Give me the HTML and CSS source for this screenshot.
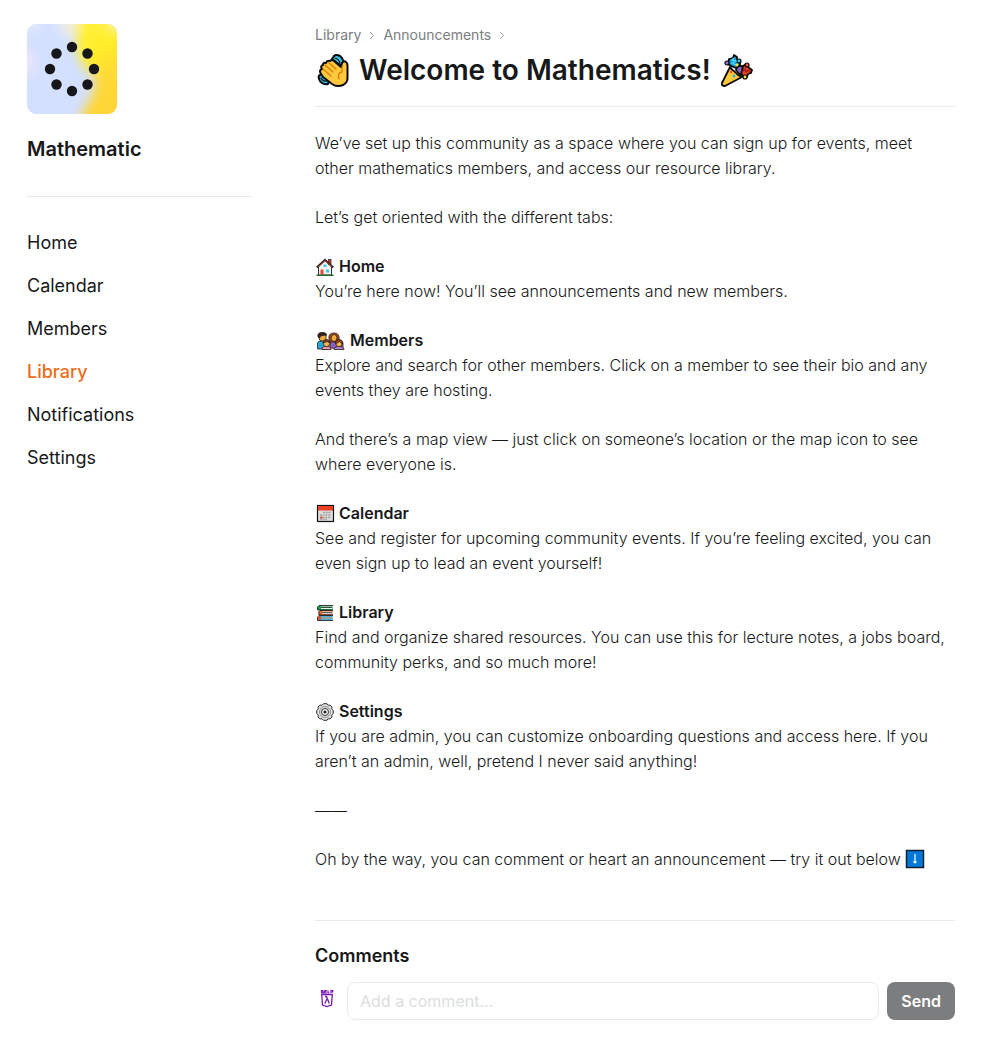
FILE: index.html
```html
<!DOCTYPE html>
<html lang="en">
<head>
<meta charset="utf-8">
<meta name="viewport" content="width=device-width, initial-scale=1">
<title>Welcome to Mathematics!</title>
<link rel="stylesheet" href="styles.css">
</head>
<body>
<div class="page">
  <aside class="sidebar">
    <svg class="logo" viewBox="0 0 90 90" role="img" aria-label="Mathematic logo">
      <defs>
        <clipPath id="tile"><rect width="90" height="90" rx="9"/></clipPath>
        <filter id="soft" x="-50%" y="-50%" width="200%" height="200%"><feGaussianBlur stdDeviation="6"/></filter>
        <linearGradient id="gold" x1="0" y1="0" x2="0.3" y2="1"><stop offset="0" stop-color="#fff34a"/><stop offset=".4" stop-color="#ffee28"/><stop offset=".62" stop-color="#ffda35"/><stop offset="1" stop-color="#ffd338"/></linearGradient>
      </defs>
      <g clip-path="url(#tile)">
        <rect width="90" height="90" fill="#d3e0ff"/>
        <g filter="url(#soft)">
          <ellipse cx="0" cy="38" rx="8" ry="14" fill="#eee5fb"/>
          <ellipse cx="3" cy="0" rx="12" ry="5" fill="#edf0fc"/>
          <ellipse cx="42" cy="0" rx="10" ry="12" fill="#f1eee5"/>
          <path d="M52-20L48 12Q50 42 68 52Q70 70 55 88L52 112H115V-20Z" fill="url(#gold)"/>
          <ellipse cx="92" cy="0" rx="12" ry="6" fill="#fff5a0"/>
        </g>
        <g fill="#17171b"><circle cx="45" cy="23" r="5.2"/><circle cx="60.500" cy="29.500" r="5.2"/><circle cx="67" cy="45" r="5.2"/><circle cx="60.500" cy="60.500" r="5.2"/><circle cx="45" cy="67" r="5.2"/><circle cx="29.500" cy="60.500" r="5.2"/><circle cx="23" cy="45" r="5.2"/><circle cx="29.500" cy="29.500" r="5.2"/></g>
      </g>
    </svg>
    <h2 class="brand">Mathematic</h2>
    <nav class="nav" aria-label="Main">
      <a href="#home">Home</a>
      <a href="#calendar">Calendar</a>
      <a href="#members">Members</a>
      <a href="#library" class="active" aria-current="page">Library</a>
      <a href="#notifications">Notifications</a>
      <a href="#settings">Settings</a>
    </nav>
  </aside>

  <main class="main">
    <header class="header">
      <nav class="crumbs" aria-label="Breadcrumb">
        <a href="#library">Library</a>
        <svg class="chevron" viewBox="0 0 6 9" aria-hidden="true"><path d="M1 1L4.500 4.500L1 8"/></svg>
        <a href="#announcements">Announcements</a>
        <svg class="chevron" viewBox="0 0 6 9" aria-hidden="true"><path d="M1 1L4.500 4.500L1 8"/></svg>
      </nav>
      <h1 class="title">
        <svg class="title-icon" viewBox="0 0 36 36" aria-hidden="true">
          <g stroke="#090909" stroke-linejoin="round" stroke-linecap="round">
            <path d="M19 4Q21 2 25 4Q29 7 28 12L25 13L17 7Z" fill="#35c6ee" stroke-width="2"/>
            <path d="M20 6Q24 7 25 11" fill="none" stroke-width="1.200"/>
            <path d="M5 23Q3 24 4 27Q6 33 13 32L14 29L7 22Z" fill="#35c6ee" stroke-width="2"/>
            <path d="M6 26Q8 30 12 29" fill="none" stroke-width="1.200"/>
            <path d="M8 25L5.500 21Q4 18 7 17Q5 14 8 13Q8 10 11 11Q12 8 15 9Q17 7 19 9L26 15L27 11Q29 8 31 10Q32.500 11 32.500 14V27Q32 31 28 33Q22 35.500 17 32Z" fill="#ffc83d" stroke-width="2"/>
          </g>
          <path d="M8 17L16 24M10 13L18 20M14 11L21 17M27 15V20Q22 21 24 27" fill="none" stroke="#d67d00" stroke-width="1.300" stroke-linecap="round"/>
        </svg>
        <span>Welcome to Mathematics!</span>
        <svg class="title-icon" viewBox="0 0 36 36" aria-hidden="true">
          <g stroke="#090909" stroke-linejoin="round" stroke-width="1.800">
            <path d="M17 18Q18 13 23 14L26 18L21 23Z" fill="#8067c6"/>
            <path d="M12 14L9 12L10 7L14 6L15 3L18 5L18 8L21 8V13L17 16Z" fill="#199bd1"/>
            <path d="M23 19L24 14L27 12L29 15L33 18L32 21L29 22L28 25L25 25L22 22Z" fill="#e9422b"/>
            <path d="M11 15L3 31Q2 34 6 34L23 25Q19 24 16 20Q12 17 11 15Z" fill="#ffc83d"/>
          </g>
          <g stroke="#090909" stroke-width="1.200"><circle cx="8" cy="11" r="2" fill="#9776d7"/><circle cx="26" cy="25" r="2" fill="#ffe02e"/><circle cx="28" cy="13" r="2" fill="#ff5a37"/><circle cx="20" cy="9" r="2" fill="#20cee8"/></g>
          <path d="M15 6L13 8L17 9L13 11L17 13" fill="none" stroke="#48d6fa" stroke-width="1.300"/>
          <path d="M23 20L26 17L27 20L30 18L31 20" fill="none" stroke="#a21a1a" stroke-width="1.200"/>
          <circle cx="18" cy="13" r="1.400" fill="#ffe02e"/><circle cx="12" cy="20" r="1.300" fill="#ef5038"/><circle cx="15" cy="24" r="1.400" fill="#20b8df"/>
        </svg>
      </h1>
    </header>

    <article class="article">
      <p>We’ve set up this community as a space where you can sign up for events, meet other mathematics members, and access our resource library.</p>
      <p>Let’s get oriented with the different tabs:</p>
      <section>
        <h3><svg class="icon" viewBox="0 0 20 20" aria-hidden="true"><path d="M3.500 9.500L10 3.500L16.500 9.500V18H3.500Z" fill="#f6f3f1" stroke="#333"/><rect x="13.500" y="2.500" width="2.500" height="5" fill="#d83b25" stroke="#333" stroke-width=".8"/><path d="M1.800 10.500L10 2.800L18.200 10.500" fill="none" stroke="#222" stroke-width="2"/><path d="M2.800 10.200L10 3.500L17.200 10.200" fill="none" stroke="#d94b30" stroke-width=".8"/><rect x="5.500" y="12.500" width="3" height="5" fill="#e64a35"/><path d="M8.500 7.500H11.500V10H8.500ZM11 12.500H14V15.500H11Z" fill="#35ccec"/><path d="M1.500 18.300H18.500" stroke="#256b2d" stroke-width="1.400"/></svg>Home</h3>
        <p>You’re here now! You’ll see announcements and new members.</p>
      </section>
      <section>
        <h3><svg class="icon family" viewBox="0 0 31 20" aria-hidden="true">
          <g stroke="#2a1b17" stroke-width=".8">
            <path d="M2.500 18V12Q3 10 6 10H11L13 12V18Z" fill="#20a8dc"/><path d="M4 5Q4 2 8 2Q11 2 11 5V8Q9 11 7 10Q4 10 4 7Z" fill="#edac3d"/><path d="M3 6Q2 1.500 7 1.500Q11 1 12 4L7 4.500Q5 5 4.500 7Z" fill="#342321"/>
            <path d="M15 17V11Q15 9 20 9Q27 9 28 12V18Z" fill="#8660c2"/><path d="M14 8Q13 2 19 2Q25 2 24 9L23 11H15Z" fill="#a94b1b"/><ellipse cx="19" cy="7" rx="3" ry="3.500" fill="#edac3d"/>
            <path d="M7 18.500V17Q8 15 12 15Q16 15 16 18.500Z" fill="#f39bb6"/><circle cx="11.500" cy="12.500" r="3.200" fill="#f2b748"/><path d="M8 12Q8 8.500 12 8.500Q15 9 15 12L12 10.500Z" fill="#9b431b"/>
            <path d="M19 18.500Q19 15.500 24 15.500Q29 15.500 29 18.500Z" fill="#b284d2"/><circle cx="24" cy="12.500" r="3.200" fill="#f2b748"/><path d="M20.500 13Q20 8.500 24 8.500Q28 8.500 27.500 13L24.500 10.500Z" fill="#9b431b"/>
          </g></svg>Members</h3>
        <p>Explore and search for other members. Click on a member to see their bio and any events they are hosting.</p>
      </section>
      <p>And there’s a map view — just click on someone’s location or the map icon to see where everyone is.</p>
      <section>
        <h3><svg class="icon" viewBox="0 0 20 20" aria-hidden="true"><rect x="2.500" y="1.500" width="16" height="16" fill="#ddd" stroke="#111" stroke-width="1.200"/><path d="M3 2H18V6.500H3Z" fill="#ed3f22"/><path d="M8 8.500H16M5 11H16M5 13.500H16M5 15.500H12" stroke="#a3a3a3" stroke-width="1.500" stroke-dasharray="2 .7"/><circle cx="6.500" cy="13.500" r="1.200" fill="#e64b32"/></svg>Calendar</h3>
        <p>See and register for upcoming community events. If you’re feeling excited, you can even sign up to lead an event yourself!</p>
      </section>
      <section>
        <h3><svg class="icon" viewBox="0 0 20 20" aria-hidden="true"><path d="M17.500 2.500H4Q2 3 2.500 7H17.500" fill="#16a34c"/><path d="M17.500 7.500H5Q3 8 4 12H17.500" fill="#e0662b"/><path d="M17.500 12.500H4Q2 13 2.500 17.500H17.500" fill="#159ad4"/><path d="M6 3.500H17V6H6ZM7 8.500H17V11H7ZM6 13.800H17V16.300H6Z" fill="#f2f2ef"/><path d="M18 2.500H4Q2 3 2.500 7H18M18 7.500H5Q3 8 4 12H18M18 12.500H4Q2 13 2.500 17.500H18M6 4.500H17M7 9.700H17M6 15H17" fill="none" stroke="#171717" stroke-width=".8"/><path d="M3 13H5.500V17H3Z" fill="#e5542e"/></svg>Library</h3>
        <p>Find and organize shared resources. You can use this for lecture notes, a jobs board, community perks, and so much more!</p>
      </section>
      <section>
        <h3><svg class="icon" viewBox="0 0 20 20" aria-hidden="true"><path d="M8.500 1.700H12L13 3.300L15 3L17 5L16.700 7L18.300 8.500V11.500L16.700 13L17 15L15 17L13 16.700L12 18.300H8.500L7 16.700L5 17L3 15L3.300 13L1.700 11.500V8.500L3.300 7L3 5L5 3L7 3.300Z" fill="#ddd" stroke="#333" stroke-linejoin="round"/><circle cx="10" cy="10" r="5.500" fill="none" stroke="#777" stroke-width=".7"/><circle cx="10" cy="10" r="3.500" fill="#fff" stroke="#333"/><circle cx="10" cy="10" r="1.600" fill="#222"/></svg>Settings</h3>
        <p>If you are admin, you can customize onboarding questions and access here. If you aren’t an admin, well, pretend I never said anything!</p>
      </section>
      <p>——</p>
      <p>Oh by the way, you can comment or heart an announcement — try it out below <svg class="icon arrow" viewBox="0 0 20 20" aria-label="Down arrow"><rect x="1.500" y="1.500" width="17" height="17" fill="#0078d7" stroke="#102033" stroke-width="1.500"/><path d="M10 5V14M8.500 12.500L10 14L11.500 12.500" fill="none" stroke="#fff" stroke-width="1.200"/></svg></p>
    </article>

    <section class="comments">
      <h2 class="comments-title">Comments</h2>
      <form class="comment-form">
        <svg class="avatar" viewBox="0 0 24 24" aria-label="Your avatar"><g fill="none" stroke="#7719b4"><path d="M6.700 7.500H17.300L16.500 18L12 19.500L7.500 18Z" stroke-width="1.300"/><path d="M8.500 3.500H6.500V4.800H8.500V6H6.200M11.700 3.500H9.800V6H11.700M9.800 4.700H11.500M13 3.500V6H14.500M16 6V3.500H17.700V5H16" stroke-width="1.200"/><path d="M10 9.500H11.500L14.300 16.500M12 12L9.800 16.500" stroke-width="1.300"/></g></svg>
        <input class="comment-input" type="text" aria-label="Add a comment" placeholder="Add a comment…">
        <button class="send" type="button">Send</button>
      </form>
    </section>
  </main>
</div>
</body>
</html>
```
FILE: styles.css
```css
* { box-sizing: border-box; }

body {
  margin: 0;
  background: #fff;
  color: #17181a;
  font-family: Inter, "Liberation Sans", sans-serif;
  font-optical-sizing: none;
}

h1, h2, h3, p { margin: 0; }
a { color: inherit; text-decoration: none; }

.page {
  display: grid;
  grid-template-columns: 224px minmax(0, 1fr);
  gap: 64px;
  max-width: 1200px;
  padding: 24px 39px 43px 27px;
}

.logo { display: block; width: 90px; height: 90px; }

.brand {
  padding: 20px 0 32px;
  border-bottom: 1px solid #e9eaeb;
  font-size: 20px;
  line-height: 30px;
  font-weight: 600;
}

.nav {
  display: flex;
  flex-direction: column;
  gap: 16px;
  padding-top: 32px;
  font-size: 18px;
  line-height: 27px;
}
.nav .active { color: #ed6c19; font-weight: 500; }

.header { padding-bottom: 16px; border-bottom: 1px solid #e9eaeb; }

.crumbs {
  display: flex;
  align-items: center;
  gap: 8px;
  color: #7c7d7f;
  font-size: 14px;
  line-height: 22px;
}
.chevron { width: 6px; height: 9px; fill: none; stroke: #9a9b9c; }

.title {
  display: flex;
  align-items: center;
  gap: 8px;
  padding-top: 4px;
  font-size: 28px;
  line-height: 40px;
  font-weight: 600;
}
.title-icon { width: 36px; height: 36px; }

.article {
  display: flex;
  flex-direction: column;
  gap: 24px;
  padding: 24px 0 48px;
  border-bottom: 1px solid #e9eaeb;
  font-size: 16px;
  line-height: 25px;
  font-weight: 300;
}
.article h3 {
  display: flex;
  align-items: center;
  gap: 4px;
  font-size: 16px;
  line-height: 25px;
  font-weight: 600;
}
.icon { width: 20px; height: 20px; }
.family { width: 31px; }
.arrow { vertical-align: text-bottom; }

.comments { padding-top: 21px; }
.comments-title { font-size: 18px; line-height: 28px; font-weight: 600; }

.comment-form {
  display: flex;
  gap: 8px;
  padding-top: 12px;
}
.avatar { width: 24px; height: 24px; margin-top: 5px; }

.comment-input {
  flex: 1;
  min-width: 0;
  height: 38px;
  padding: 0 12px;
  border: 1px solid #e9eaeb;
  border-radius: 8px;
  background: #fff;
  color: inherit;
  font: 400 16px/24px Inter, "Liberation Sans", sans-serif;
}
.comment-input::placeholder { color: #dcddde; opacity: 1; }

.send {
  height: 38px;
  padding: 0 14px;
  border: 0;
  border-radius: 8px;
  background: #7c7d7f;
  color: #fff;
  font: 600 16px/24px Inter, "Liberation Sans", sans-serif;
}
```
